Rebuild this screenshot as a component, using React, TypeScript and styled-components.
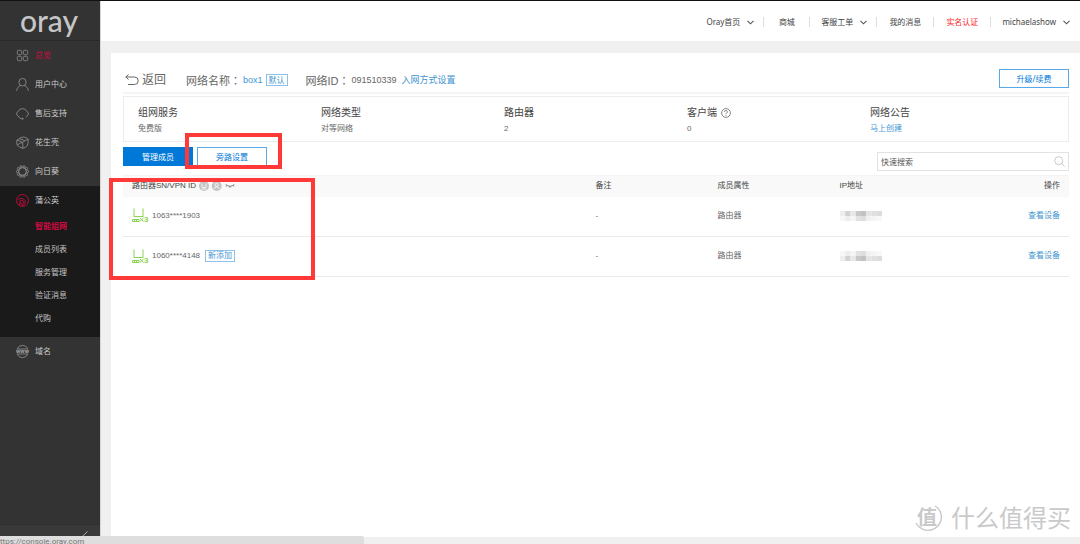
import React from "react";
import styled, { createGlobalStyle } from "styled-components";

const GlobalStyle = createGlobalStyle`
  * { box-sizing: border-box; }
  body {
    margin: 0;
    background: #f0f0f0;
    color: #4a4a4a;
    font: 8px/12px "Noto Sans", "Noto Sans CJK SC", sans-serif;
  }
  button, input { font: inherit; color: inherit; margin: 0; }
  a { text-decoration: none; color: inherit; }
  ul { list-style: none; margin: 0; padding: 0; }
  svg { display: block; flex: none; overflow: visible; }
`;

const Shell = styled.div`
  position: relative;
  display: flex;
  min-height: 100vh;
  border-top: 1px solid #111;
`;

const Sidebar = styled.aside`
  display: flex;
  flex-direction: column;
  flex: 0 0 100px;
  background: #333;
  color: #ccc;
`;

const Logo = styled.a`
  display: flex;
  align-items: center;
  justify-content: center;
  height: 40px;
  padding: 0 2px 2px 0;
  border-bottom: 1px solid #2a2a2a;
  color: #c6c6c6;
  font: 500 30px/36px Lato, sans-serif;
`;

const NavLink = styled.a<{ $active?: boolean }>`
  display: flex;
  align-items: center;
  gap: 6px;
  height: 29px;
  padding: 0 0 1px 16px;
  color: ${(p) => (p.$active ? "#cf0a40" : "#ccc")};
`;

const OpenGroup = styled.li`
  padding-bottom: 7px;
  background: #1a1a1a;
`;

const SubLink = styled.a<{ $active?: boolean }>`
  display: flex;
  align-items: center;
  height: 23px;
  padding: 0 0 2px 35px;
  color: ${(p) => (p.$active ? "#cf0a40" : "#c4c4c4")};
  font-weight: ${(p) => (p.$active ? 700 : 400)};
`;

const Collapse = styled.button`
  display: flex;
  justify-content: flex-end;
  height: 20px;
  margin-top: auto;
  padding: 6px 12px;
  border: 0;
  border-top: 1px solid #303030;
  background: #393939;
`;

const Content = styled.div`
  display: flex;
  flex: 1;
  flex-direction: column;
  min-width: 0;
  border-left: 1px solid #d6d6d6;
`;

const TopBar = styled.header`
  display: flex;
  justify-content: flex-end;
  align-items: center;
  height: 40px;
  padding: 2px 10px 0 0;
  background: #fff;
`;

const TopItem = styled.div<{ $menu?: boolean }>`
  display: flex;
  align-items: center;
  justify-content: center;
  min-width: 46px;
  height: 10px;
  padding: ${(p) => (p.$menu ? "0 9px 0 11px" : "0 12px")};
  & + & { border-left: 1px solid #ddd; }
  &:last-child { padding-right: 0; }
`;

const TopLink = styled.a<{ $alert?: boolean }>`
  color: ${(p) => (p.$alert ? "#ff1a1a" : "#444")};
`;

const TopButton = styled.button`
  display: flex;
  align-items: center;
  gap: 7px;
  padding: 0;
  border: 0;
  background: none;
  color: #444;
`;

const Panel = styled.main`
  flex: 1;
  margin: 12px 0 7px 10px;
  padding: 16px 11px 0 12px;
  background: #fff;
`;

const TitleRow = styled.div`
  display: flex;
  align-items: center;
  height: 25px;
  margin-bottom: 2px;
  padding: 0 0 1px 2px;
  border-bottom: 2px solid #f5f5f5;
`;

const BackButton = styled.button`
  display: flex;
  align-items: center;
  gap: 3px;
  margin-right: 20px;
  padding: 0;
  border: 0;
  background: none;
  color: #666;
  font-size: 12px;
  line-height: 16px;
`;

const Caption = styled.span`
  margin-right: 2px;
  color: #666;
  font: 11px/16px "Liberation Sans", "Noto Sans CJK SC", sans-serif;
`;

const Colon = styled.span`
  font-family: "Noto Sans CJK TC", sans-serif;
`;

const Value = styled.span<{ $link?: boolean }>`
  color: ${(p) => (p.$link ? "#3f95d2" : "#666")};
  font: 9px/12px "Liberation Sans", "Noto Sans CJK SC", sans-serif;
`;

const Tag = styled.span`
  display: inline-flex;
  align-items: center;
  height: 12px;
  margin: 0 18px 0 3px;
  padding: 0 2px;
  border: 1px solid #8dc0e6;
  color: #3f95d2;
  line-height: 10px;
`;

const BlueLink = styled.a`
  color: #3f95d2;
`;

const SetupLink = styled(BlueLink)`
  margin-left: 5px;
  font-size: 9px;
`;

const Button = styled.button<{ $primary?: boolean }>`
  width: 70px;
  height: 19px;
  padding: 0;
  border: 1px solid ${(p) => (p.$primary ? "#0078d7" : "#5aa9e6")};
  background: ${(p) => (p.$primary ? "#0078d7" : "#fff")};
  color: ${(p) => (p.$primary ? "#fff" : "#0078d7")};
  line-height: 16px;
`;

const UpgradeButton = styled(Button)`
  align-self: flex-start;
  margin-left: auto;
`;

const Summary = styled.section`
  display: grid;
  grid-template-columns: repeat(5, 1fr);
  height: 46px;
  padding: 8px 15px 0 14px;
  border: 1px solid #ececec;
`;

const SummaryTitle = styled.h2`
  display: flex;
  align-items: center;
  gap: 4px;
  margin: 0 0 3px;
  color: #444;
  font-size: 10px;
  font-weight: 400;
  line-height: 15px;
`;

const SummaryText = styled.div`
  color: #666;
  font-family: "Liberation Sans", "Noto Sans CJK SC", sans-serif;
`;

const Tools = styled.div`
  display: flex;
  gap: 4px;
  margin: 5px 0 4px;
`;

const Search = styled.label`
  display: flex;
  align-items: center;
  width: 192px;
  height: 19px;
  margin: 5px 0 0 auto;
  padding: 0 3px;
  border: 1px solid #e2e2e2;
`;

const SearchInput = styled.input`
  flex: 1;
  min-width: 0;
  padding: 0;
  border: 0;
  outline: 0;
  background: none;
  &::placeholder { color: #555; opacity: 1; }
`;

const Table = styled.table`
  width: 100%;
  table-layout: fixed;
  border-collapse: collapse;
  color: #666;
  font-family: "Liberation Sans", "Noto Sans CJK SC", sans-serif;
`;

const Th = styled.th<{ $width?: string }>`
  width: ${(p) => p.$width ?? "auto"};
  height: 21px;
  padding: 0 9px;
  border-top: 1px solid #f4f4f4;
  background: #f9f9f9;
  color: #444;
  font-weight: 400;
  text-align: left;
  &:last-child { text-align: right; }
`;

const Td = styled.td`
  height: 40px;
  padding: 0 9px 1px;
  border-bottom: 1px solid #ebebeb;
  &:last-child { text-align: right; }
`;

const Inline = styled.div`
  display: flex;
  align-items: center;
  gap: 3px;
`;

const RowTag = styled(Tag)`
  margin: 0 0 0 2px;
`;

const Highlight = styled.div<{ $x: number; $y: number; $w: number; $h: number }>`
  position: absolute;
  left: ${(p) => p.$x}px;
  top: ${(p) => p.$y}px;
  width: ${(p) => p.$w}px;
  height: ${(p) => p.$h}px;
  border: 4px solid #ff3838;
  pointer-events: none;
`;

const StatusBar = styled.div`
  position: absolute;
  left: 0;
  bottom: 0;
  width: 364px;
  height: 8px;
  overflow: hidden;
  border-radius: 0 2px 0 0;
  background: #dedede;
  color: #777;
  font-family: Roboto, sans-serif;
`;

const Watermark = styled.div`
  position: absolute;
  right: 9px;
  bottom: 10px;
  display: flex;
  align-items: center;
  gap: 8px;
  color: #c9c9c9;
  font-size: 24px;
  line-height: 32px;
`;

const SideIcon = ({ children, color = "#8a8a8a" }: { children: React.ReactNode; color?: string }) => (
  <svg width="13" height="13" viewBox="0 0 13 13" fill="none" stroke={color} strokeWidth="0.9">
    {children}
  </svg>
);

const Chevron = () => (
  <svg width="7" height="5" viewBox="0 0 7 5" fill="none" stroke="#555" strokeWidth="1.1">
    <path d="M0.5 0.8 3.5 3.8 6.5 0.8" />
  </svg>
);

const petals = Array.from({ length: 10 }, (_, i) => {
  const a = (i * Math.PI) / 5;
  return { x: 6.5 + 5 * Math.cos(a), y: 6.5 + 5 * Math.sin(a) };
});

const menu = [
  {
    label: "总览",
    active: true,
    icon: (
      <>
        <rect x="1.3" y="1.3" width="4.4" height="4.4" rx="1.3" />
        <rect x="7.3" y="1.3" width="4.4" height="4.4" rx="1.3" />
        <rect x="1.3" y="7.3" width="4.4" height="4.4" rx="1.3" />
        <rect x="7.3" y="7.3" width="4.4" height="4.4" rx="1.3" />
      </>
    ),
  },
  {
    label: "用户中心",
    icon: (
      <>
        <ellipse cx="6.5" cy="4.2" rx="3.6" ry="3.8" />
        <path d="M0.7 12.8C0.9 10 2.4 8.4 4.8 7.5M12.3 12.8C12.1 10 10.6 8.4 8.2 7.5" />
      </>
    ),
  },
  {
    label: "售后支持",
    icon: (
      <>
        <path d="M1.9 4.8A4.9 4.9 0 0 1 11.1 4.8M1.9 8.6A5 5 0 0 0 5.6 11.7" />
        <path d="M1.9 4.8C0.1 5 0.1 8.4 1.9 8.6M11.1 4.8C12.9 5 12.9 8.4 11.1 8.6" />
        <path d="M5.6 11.7H7.4" strokeWidth="1.6" />
        <path d="M11.1 8.6Q10.6 9.8 9.8 10.4" />
      </>
    ),
  },
  {
    label: "花生壳",
    icon: (
      <>
        <path d="M0.9 4.2Q3.6 1.6 7.6 0.9 10.6 1.6 12.2 3.4 12.6 6.6 11.4 9.6 9.4 11.8 6.8 12.3 3.4 11.4 1.2 9.2 0.4 6.8 0.9 4.2Z" />
        <path d="M0.9 4.2Q3.6 4.6 6.6 6.4 9.2 4.2 12.2 3.4M6.6 6.4Q7 9.4 6.8 12.3M1.2 9.2Q3.2 7 6.6 6.4M3.4 3Q6 3 8.8 4.8" />
      </>
    ),
  },
  {
    label: "向日葵",
    icon: (
      <>
        <circle cx="6.5" cy="6.5" r="3.8" />
        {petals.map((p, i) => (
          <circle key={i} cx={p.x} cy={p.y} r="1.1" />
        ))}
      </>
    ),
  },
];

const subMenu = ["智能组网", "成员列表", "服务管理", "验证消息", "代购"];

const rows = [
  { sn: "1063****1903", fresh: false },
  { sn: "1060****4148", fresh: true },
];

const RouterIcon = () => (
  <svg width="17" height="15" viewBox="0 0 17 15" fill="none" stroke="#8ad455">
    <path d="M2 0.5V8M11 0.5V8M1.5 8.5H11.5" />
    <path d="M0.5 11.5H7V13.5H0.5ZM2.5 11V13.5M4.5 11V13.5" />
    <path d="M7.8 9.8 11.6 13.6M11.6 9.8 7.8 13.6" />
    <text x="12" y="14.4" fontSize="8" fontWeight="700" fill="#8ad455" stroke="none">3</text>
  </svg>
);

const mosaic = [
  ["#eee", "#d2d2d2", "#e8e8e8", "#c8c8c8", "#c2c2c2", "#e4e4e4", "#dfdfdf", "#dcdcdc"],
  ["#f7f7f7", "#ececec", "#f5f5f5", "#e2e2e2", "#dedede", "#f0f0f0", "#f4f4f4", "#f8f8f8"],
];

const MaskedAddress = ({ flip }: { flip: boolean }) => (
  <svg width="42" height="10" viewBox="0 0 42 10" role="img" aria-label="IP">
    {(flip ? [mosaic[1], mosaic[0]] : mosaic).map((line, y) =>
      line.map((fill, x) => (
        <rect key={`${x}-${y}`} x={x * 5.25} y={y * 5} width="5.3" height="5" fill={fill} />
      ))
    )}
  </svg>
);

export default function App() {
  return (
    <>
      <GlobalStyle />
      <Shell>
        <Sidebar>
          <Logo href="#">oray</Logo>
          <ul>
            {menu.map((item) => (
              <li key={item.label}>
                <NavLink href="#" $active={item.active}>
                  <SideIcon>{item.icon}</SideIcon>
                  {item.label}
                </NavLink>
              </li>
            ))}
            <OpenGroup>
              <NavLink href="#">
                <SideIcon color="#c30d3d">
                  <circle cx="6.5" cy="6.5" r="6" />
                  <circle cx="5.6" cy="8.2" r="2" />
                  <path d="M2 5.6C4.6 3.6 8.8 4.4 9.2 7.6 9.4 9.6 7.8 11.4 5.6 11.4M3 11 5.4 8.4" />
                </SideIcon>
                蒲公英
              </NavLink>
              <ul>
                {subMenu.map((label, i) => (
                  <li key={label}>
                    <SubLink href="#" $active={i === 0}>{label}</SubLink>
                  </li>
                ))}
              </ul>
            </OpenGroup>
            <li>
              <NavLink href="#">
                <SideIcon>
                  <path d="M1 4A6 6 0 0 1 12 4M1 9A6 6 0 0 0 12 9M1 4H12M1 9H12" />
                  <text x="6.5" y="8" fontSize="5" fontWeight="700" textAnchor="middle" fill="#aaa" stroke="none">www</text>
                </SideIcon>
                域名
              </NavLink>
            </li>
          </ul>
          <Collapse aria-label="收起菜单">
            <svg width="6" height="10" viewBox="0 0 6 10" fill="none" stroke="#aaa">
              <path d="M5.5 0.5 0.8 5 5.5 9.5" />
            </svg>
          </Collapse>
        </Sidebar>

        <Content>
          <TopBar>
            <TopItem $menu><TopButton>Oray首页<Chevron /></TopButton></TopItem>
            <TopItem><TopLink href="#">商城</TopLink></TopItem>
            <TopItem $menu><TopButton>客服工单<Chevron /></TopButton></TopItem>
            <TopItem><TopLink href="#">我的消息</TopLink></TopItem>
            <TopItem><TopLink href="#" $alert>实名认证</TopLink></TopItem>
            <TopItem $menu><TopButton>michaelashow<Chevron /></TopButton></TopItem>
          </TopBar>

          <Panel>
            <TitleRow>
              <BackButton>
                <svg width="14" height="12" viewBox="0 0 14 12" fill="none" stroke="#666">
                  <path d="M3.5 0.5 0.8 3 3.5 5.5M0.8 3H9.5A3.7 3.7 0 0 1 9.5 10.5H3" />
                </svg>
                返回
              </BackButton>
              <Caption>网络名称<Colon>：</Colon></Caption>
              <Value $link>box1</Value>
              <Tag>默认</Tag>
              <Caption>网络ID<Colon>：</Colon></Caption>
              <Value>091510339</Value>
              <SetupLink href="#">入网方式设置</SetupLink>
              <UpgradeButton>升级/续费</UpgradeButton>
            </TitleRow>

            <Summary>
              <div><SummaryTitle>组网服务</SummaryTitle><SummaryText>免费版</SummaryText></div>
              <div><SummaryTitle>网络类型</SummaryTitle><SummaryText>对等网络</SummaryText></div>
              <div><SummaryTitle>路由器</SummaryTitle><SummaryText>2</SummaryText></div>
              <div>
                <SummaryTitle>
                  客户端
                  <svg width="10" height="10" viewBox="0 0 10 10" fill="none" stroke="#666" strokeWidth="0.8">
                    <circle cx="5" cy="5" r="4.4" />
                    <path d="M3.6 4A1.4 1.4 0 1 1 5.4 5.2Q5 5.4 5 6.2M5 7V7.8" />
                  </svg>
                </SummaryTitle>
                <SummaryText>0</SummaryText>
              </div>
              <div>
                <SummaryTitle>网络公告</SummaryTitle>
                <SummaryText><BlueLink href="#">马上创建</BlueLink></SummaryText>
              </div>
            </Summary>

            <Tools>
              <Button $primary>管理成员</Button>
              <Button>旁路设置</Button>
              <Search>
                <SearchInput type="search" aria-label="快速搜索" placeholder="快速搜索" />
                <svg width="11" height="11" viewBox="0 0 11 11" fill="none" stroke="#bbb" strokeWidth="0.8">
                  <circle cx="4.7" cy="4.7" r="4" />
                  <path d="M7.6 7.6 10.6 10.6" />
                </svg>
              </Search>
            </Tools>

            <Table>
              <thead>
                <tr>
                  <Th $width="49%">
                    <Inline>
                      路由器SN/VPN ID
                      <svg width="36" height="10" viewBox="0 0 36 10" fill="none">
                        <circle cx="5" cy="5" r="5" fill="#c4c4c4" />
                        <circle cx="17.7" cy="5" r="5" fill="#c4c4c4" />
                        <path d="M3 2.4V6.4H7V2.4M2.6 8H7.4" stroke="#fff" strokeWidth="0.8" />
                        <circle cx="17.7" cy="3.7" r="1.5" stroke="#fff" strokeWidth="0.8" />
                        <path d="M15 8Q15.4 5.8 17.7 5.8T20.4 8" stroke="#fff" strokeWidth="0.8" />
                        <path d="M26.6 3.4Q31 7.2 35.4 3.4M27.8 4.2 27 5.6M31 5.2V6.8M34.2 4.2 35 5.6" stroke="#777" strokeWidth="0.9" />
                      </svg>
                    </Inline>
                  </Th>
                  <Th $width="122px">备注</Th>
                  <Th $width="122px">成员属性</Th>
                  <Th $width="122px">IP地址</Th>
                  <Th>操作</Th>
                </tr>
              </thead>
              <tbody>
                {rows.map((row) => (
                  <tr key={row.sn}>
                    <Td>
                      <Inline>
                        <RouterIcon />
                        <span>{row.sn}</span>
                        {row.fresh && <RowTag>新添加</RowTag>}
                      </Inline>
                    </Td>
                    <Td>-</Td>
                    <Td>路由器</Td>
                    <Td><MaskedAddress flip={row.fresh} /></Td>
                    <Td><BlueLink href="#">查看设备</BlueLink></Td>
                  </tr>
                ))}
              </tbody>
            </Table>
          </Panel>
        </Content>

        <Highlight $x={185} $y={132} $w={97} $h={36} />
        <Highlight $x={109} $y={177} $w={206} $h={102} />
        <Watermark>
          <svg width="30" height="30" viewBox="0 0 30 30" fill="none" stroke="#c9c9c9">
            <path d="M3 20A13.5 13.5 0 0 0 28.5 14 13.5 13.5 0 0 0 22 3" strokeWidth="1.4" />
            <text x="14" y="22" fontSize="20" fontWeight="700" textAnchor="middle" fill="#c9c9c9" stroke="none">值</text>
          </svg>
          什么值得买
        </Watermark>
        <StatusBar>ttps://console.oray.com</StatusBar>
      </Shell>
    </>
  );
}
